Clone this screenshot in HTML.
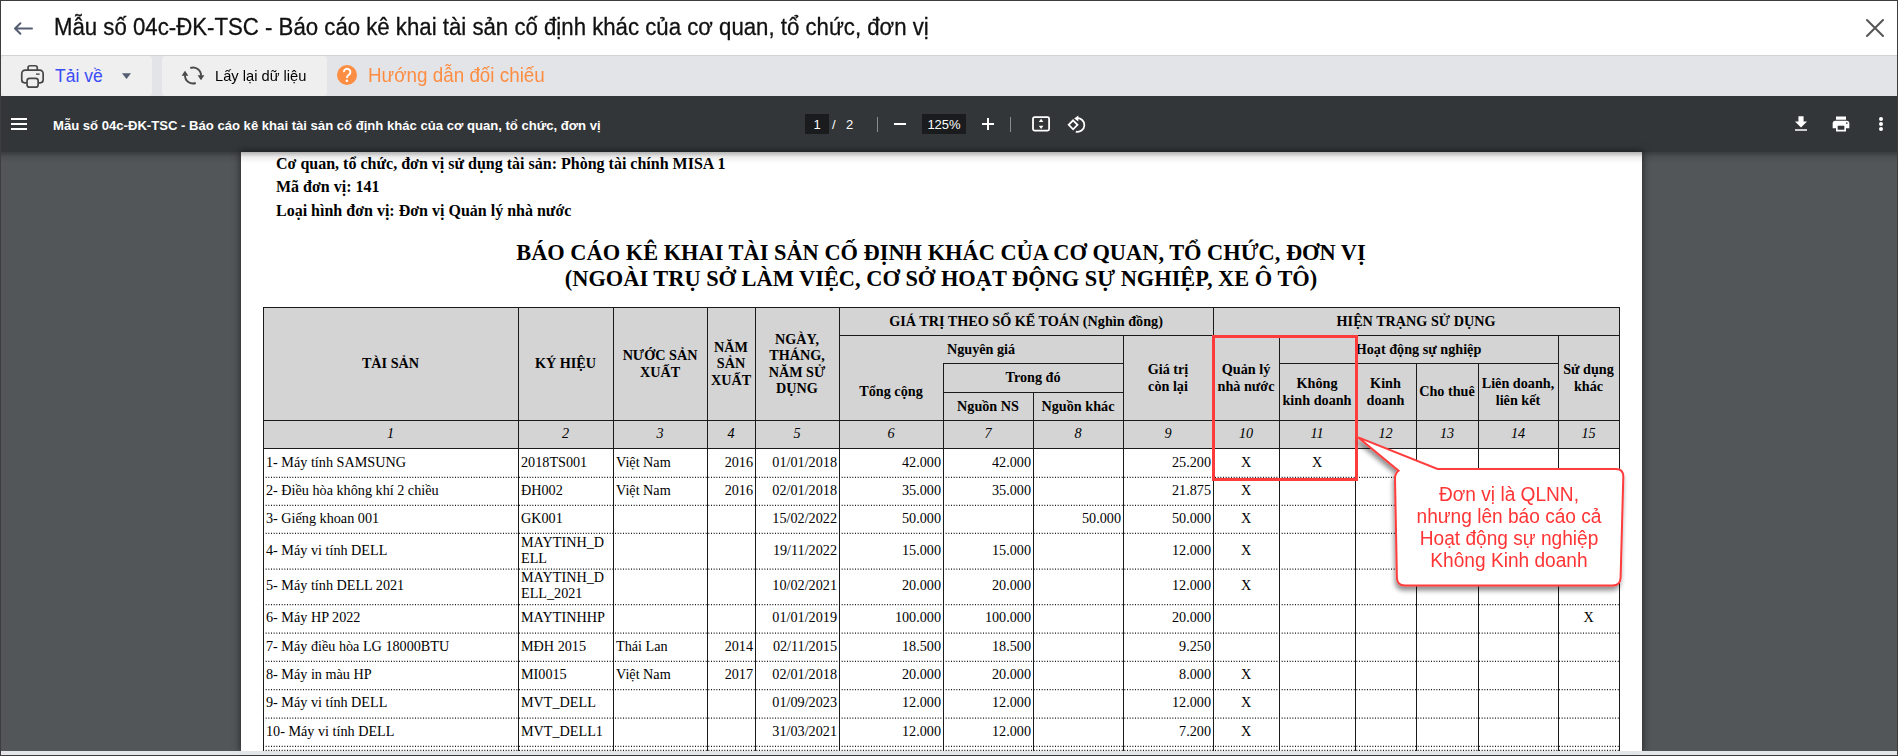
<!DOCTYPE html>
<html><head><meta charset="utf-8"><style>
*{margin:0;padding:0;box-sizing:border-box}
html,body{width:1898px;height:756px;overflow:hidden;background:#3d3d3d;font-family:"Liberation Sans",sans-serif}
.a{position:absolute}
.t{position:absolute;white-space:pre;line-height:1}
.s{font-family:"Liberation Serif",serif;color:#000}
.c{position:absolute;display:flex;align-items:center;justify-content:center;text-align:center;font-family:"Liberation Serif",serif;font-weight:bold;font-size:14.2px;line-height:16.5px;color:#000;white-space:pre}
.d{position:absolute;display:flex;align-items:center;font-family:"Liberation Serif",serif;font-size:14.2px;line-height:16px;color:#000;white-space:pre}
.hl{position:absolute;height:1px;background:#1a1a1a}
.vl{position:absolute;width:1px;background:#1a1a1a}
.dl{position:absolute;height:1px;background:repeating-linear-gradient(90deg,#222 0,#222 1px,transparent 1px,transparent 2.667px)}
</style></head><body>
<div class="a" style="left:1px;top:1px;width:1896px;height:54px;background:#fff"></div>
<div class="a" style="left:1px;top:55px;width:1896px;height:1px;background:#d3d3d5"></div>
<div class="a" style="left:1px;top:56px;width:1896px;height:40px;background:#e3e4e8"></div>
<div class="a" style="left:1px;top:56px;width:151px;height:40px;background:#efefef;border-radius:4px"></div>
<div class="a" style="left:162px;top:56px;width:165px;height:40px;background:#efefef;border-radius:4px"></div>
<div class="a" style="left:1px;top:96px;width:1896px;height:56px;background:#323639"></div>
<div class="a" style="left:1px;top:152px;width:1896px;height:599px;background:#525659"></div>
<svg class="a" style="left:12px;top:20px" width="24" height="17" viewBox="0 0 24 17"><path d="M3 8.5H20M8.4 3.3L3 8.5L8.4 13.7" fill="none" stroke="#555e72" stroke-width="2" stroke-linecap="round" stroke-linejoin="round"/></svg>
<div class="t" style="left:54px;top:16px;font-size:23.5px;color:#111;-webkit-text-stroke:0.3px #111;transform:scaleX(0.945);transform-origin:0 0">Mẫu số 04c-ĐK-TSC - Báo cáo kê khai tài sản cố định khác của cơ quan, tổ chức, đơn vị</div>
<svg class="a" style="left:1864px;top:17px" width="22" height="22" viewBox="0 0 22 22"><path d="M3 3L19 19M19 3L3 19" stroke="#555" stroke-width="2" stroke-linecap="round"/></svg>
<svg class="a" style="left:15px;top:60px" width="40" height="32" viewBox="15 60 40 32" fill="none" stroke="#474747" stroke-width="1.7"><path d="M28.05 70.05V67.75A2 2 0 0 1 30.05 65.75H35.25A2 2 0 0 1 37.25 67.75V70.05"/><path d="M27.05 82.85H24.75A3 3 0 0 1 21.75 79.85V73.55A3.5 3.5 0 0 1 25.25 70.05H39.65A3.5 3.5 0 0 1 43.15 73.55V79.85A3 3 0 0 1 40.15 82.85H38.15"/><rect x="27.05" y="78.35" width="11.1" height="8.8" rx="2.5"/><path d="M36 74.15H39.6" stroke-width="1.4"/></svg>
<div class="t" style="left:55px;top:68px;font-size:17.5px;color:#3b4cf5">Tải về</div>
<svg class="a" style="left:121px;top:72px" width="11" height="8" viewBox="0 0 11 8"><path d="M1 1.2h9L5.5 7z" fill="#555e72"/></svg>
<svg class="a" style="left:179px;top:65px" width="28" height="22" viewBox="179 65 28 22" fill="none" stroke="#4a4a4a" stroke-width="1.9"><path d="M190.3 68A8 8 0 0 1 201 75.8"/><path d="M195.7 83A8 8 0 0 1 185 75.2"/><path d="M197.6 75.2H204.4L201 80.2z" fill="#4a4a4a" stroke="none"/><path d="M181.6 75.8H188.4L185 70.8z" fill="#4a4a4a" stroke="none"/></svg>
<div class="t" style="left:214.5px;top:67.5px;font-size:15px;color:#000;transform:scaleX(0.978);transform-origin:0 0">Lấy lại dữ liệu</div>
<div class="a" style="left:337px;top:65px;width:20px;height:20px;border-radius:50%;background:#fd8d42"></div>
<svg class="a" style="left:337px;top:65px" width="20" height="20" viewBox="0 0 20 20"><path d="M6.9 7.1A3.25 3.25 0 1 1 12.2 9.5L11 10.6Q9.9 11.5 9.9 13" fill="none" stroke="#fff" stroke-width="1.9"/><circle cx="9.9" cy="15.75" r="1.3" fill="#fff"/></svg>
<div class="t" style="left:368.3px;top:66.3px;font-size:19.8px;color:#fd8d42;transform:scaleX(0.952);transform-origin:0 0">Hướng dẫn đối chiếu</div>
<div class="a" style="left:11px;top:118px;width:16px;height:2px;background:#fff"></div>
<div class="a" style="left:11px;top:123px;width:16px;height:2px;background:#fff"></div>
<div class="a" style="left:11px;top:128px;width:16px;height:2px;background:#fff"></div>
<div class="t" style="left:53px;top:118.5px;font-size:13.1px;font-weight:bold;color:#fff">Mẫu số 04c-ĐK-TSC - Báo cáo kê khai tài sản cố định khác của cơ quan, tổ chức, đơn vị</div>
<div class="a" style="left:805px;top:114px;width:24px;height:20px;background:#191b1c"></div>
<div class="t" style="left:805px;top:118px;width:24px;text-align:center;font-size:13px;color:#fff">1</div>
<div class="t" style="left:832px;top:118px;font-size:13px;color:#fff">/</div>
<div class="t" style="left:846px;top:118px;font-size:13px;color:#fff">2</div>
<div class="a" style="left:877px;top:117px;width:1px;height:15px;background:#8a8c8e"></div>
<div class="a" style="left:894px;top:123px;width:12px;height:2px;background:#fff"></div>
<div class="a" style="left:922px;top:114px;width:44px;height:20px;background:#191b1c"></div>
<div class="t" style="left:922px;top:118px;width:44px;text-align:center;font-size:13px;color:#fff">125%</div>
<div class="a" style="left:982px;top:123px;width:12px;height:2px;background:#fff"></div>
<div class="a" style="left:987px;top:118px;width:2px;height:12px;background:#fff"></div>
<div class="a" style="left:1010px;top:117px;width:1px;height:15px;background:#8a8c8e"></div>
<svg class="a" style="left:1031px;top:115px" width="21" height="18" viewBox="0 0 21 18"><rect x="2" y="2.2" width="16.1" height="13.4" rx="1.5" fill="none" stroke="#fff" stroke-width="1.8"/><path d="M7.8 7H12.4L10.1 3.8z M7.8 10.8H12.4L10.1 14z" fill="#fff"/></svg>
<svg class="a" style="left:1064px;top:114px" width="24" height="20" viewBox="0 0 24 20" fill="none" stroke="#fff" stroke-width="1.8"><path d="M9.1 6.3L13.5 10.8L9.1 15.3L4.7 10.8z"/><path d="M12.6 4.3A6.8 6.8 0 1 1 11.8 17.6"/><path d="M10.2 4.6L14.3 1.6L14.3 7.4z" fill="#fff" stroke="none"/></svg>
<svg class="a" style="left:1791px;top:114px" width="20" height="20" viewBox="0 0 24 24"><path fill="#fff" d="M19 9h-4V3H9v6H5l7 7 7-7zM5 18v2h14v-2H5z" transform="translate(12 12) scale(1.03) translate(-12 -12)"/></svg>
<svg class="a" style="left:1831px;top:114px" width="20" height="20" viewBox="0 0 24 24"><path fill="#fff" d="M19 8H5c-1.66 0-3 1.34-3 3v6h4v4h12v-4h4v-6c0-1.66-1.34-3-3-3zm-3 11H8v-5h8v5zm3-7c-.55 0-1-.45-1-1s.45-1 1-1 1 .45 1 1-.45 1-1 1zm-1-9H6v4h12V3z"/></svg>
<div class="a" style="left:1879px;top:117.2px;width:4px;height:4px;border-radius:50%;background:#fff"></div>
<div class="a" style="left:1879px;top:122.2px;width:4px;height:4px;border-radius:50%;background:#fff"></div>
<div class="a" style="left:1879px;top:127.19999999999999px;width:4px;height:4px;border-radius:50%;background:#fff"></div>
<div class="a" style="left:241px;top:152px;width:1401px;height:599px;background:#fff;box-shadow:0 0 7px 1px rgba(0,0,0,.5)"></div>
<div class="a" style="left:1px;top:152px;width:1896px;height:11px;background:linear-gradient(rgba(0,0,0,.3),rgba(0,0,0,.08) 45%,rgba(0,0,0,0))"></div>
<div class="t s" style="left:276px;top:156.0px;font-size:16px;font-weight:bold">Cơ quan, tổ chức, đơn vị sử dụng tài sản: Phòng tài chính MISA 1</div>
<div class="t s" style="left:276px;top:179.4px;font-size:16px;font-weight:bold">Mã đơn vị: 141</div>
<div class="t s" style="left:276px;top:202.7px;font-size:16px;font-weight:bold">Loại hình đơn vị: Đơn vị Quản lý nhà nước</div>
<div class="t s" style="left:0;width:1882px;text-align:center;top:242px;font-size:22.4px;font-weight:bold">BÁO CÁO KÊ KHAI TÀI SẢN CỐ ĐỊNH KHÁC CỦA CƠ QUAN, TỔ CHỨC, ĐƠN VỊ</div>
<div class="t s" style="left:0;width:1882px;text-align:center;top:268px;font-size:22.4px;font-weight:bold">(NGOÀI TRỤ SỞ LÀM VIỆC, CƠ SỞ HOẠT ĐỘNG SỰ NGHIỆP, XE Ô TÔ)</div>
<div class="a" style="left:263px;top:307px;width:1356px;height:141px;background:#d4d4d4"></div>
<div class="c" style="left:263px;top:307px;width:255px;height:113px;">TÀI SẢN</div>
<div class="c" style="left:518px;top:307px;width:95px;height:113px;">KÝ HIỆU</div>
<div class="c" style="left:613px;top:307px;width:94px;height:113px;">NƯỚC SẢN
XUẤT</div>
<div class="c" style="left:707px;top:307px;width:48px;height:113px;">NĂM
SẢN
XUẤT</div>
<div class="c" style="left:755px;top:307px;width:84px;height:113px;">NGÀY,
THÁNG,
NĂM SỬ
DỤNG</div>
<div class="c" style="left:839px;top:307px;width:374px;height:28px;">GIÁ TRỊ THEO SỔ KẾ TOÁN (Nghìn đồng)</div>
<div class="c" style="left:1213px;top:307px;width:406px;height:28px;">HIỆN TRẠNG SỬ DỤNG</div>
<div class="c" style="left:839px;top:335px;width:284px;height:28px;">Nguyên giá</div>
<div class="c" style="left:1123px;top:335px;width:90px;height:85px;">Giá trị
còn lại</div>
<div class="c" style="left:1213px;top:335px;width:66px;height:85px;">Quản lý
nhà nước</div>
<div class="c" style="left:1279px;top:335px;width:279px;height:28px;">Hoạt động sự nghiệp</div>
<div class="c" style="left:1558px;top:335px;width:61px;height:85px;">Sử dụng
khác</div>
<div class="c" style="left:839px;top:363px;width:104px;height:57px;">Tổng cộng</div>
<div class="c" style="left:943px;top:363px;width:180px;height:29px;">Trong đó</div>
<div class="c" style="left:943px;top:392px;width:90px;height:28px;">Nguồn NS</div>
<div class="c" style="left:1033px;top:392px;width:90px;height:28px;">Nguồn khác</div>
<div class="c" style="left:1279px;top:363px;width:76px;height:57px;">Không
kinh doanh</div>
<div class="c" style="left:1355px;top:363px;width:61px;height:57px;">Kinh
doanh</div>
<div class="c" style="left:1416px;top:363px;width:62px;height:57px;">Cho thuê</div>
<div class="c" style="left:1478px;top:363px;width:80px;height:57px;">Liên doanh,
liên kết</div>
<div class="c" style="left:263px;top:419px;width:255px;height:28px;font-weight:normal;font-style:italic">1</div>
<div class="c" style="left:518px;top:419px;width:95px;height:28px;font-weight:normal;font-style:italic">2</div>
<div class="c" style="left:613px;top:419px;width:94px;height:28px;font-weight:normal;font-style:italic">3</div>
<div class="c" style="left:707px;top:419px;width:48px;height:28px;font-weight:normal;font-style:italic">4</div>
<div class="c" style="left:755px;top:419px;width:84px;height:28px;font-weight:normal;font-style:italic">5</div>
<div class="c" style="left:839px;top:419px;width:104px;height:28px;font-weight:normal;font-style:italic">6</div>
<div class="c" style="left:943px;top:419px;width:90px;height:28px;font-weight:normal;font-style:italic">7</div>
<div class="c" style="left:1033px;top:419px;width:90px;height:28px;font-weight:normal;font-style:italic">8</div>
<div class="c" style="left:1123px;top:419px;width:90px;height:28px;font-weight:normal;font-style:italic">9</div>
<div class="c" style="left:1213px;top:419px;width:66px;height:28px;font-weight:normal;font-style:italic">10</div>
<div class="c" style="left:1279px;top:419px;width:76px;height:28px;font-weight:normal;font-style:italic">11</div>
<div class="c" style="left:1355px;top:419px;width:61px;height:28px;font-weight:normal;font-style:italic">12</div>
<div class="c" style="left:1416px;top:419px;width:62px;height:28px;font-weight:normal;font-style:italic">13</div>
<div class="c" style="left:1478px;top:419px;width:80px;height:28px;font-weight:normal;font-style:italic">14</div>
<div class="c" style="left:1558px;top:419px;width:61px;height:28px;font-weight:normal;font-style:italic">15</div>
<div class="hl" style="left:263px;top:307px;width:1357px"></div>
<div class="hl" style="left:839px;top:335px;width:781px"></div>
<div class="hl" style="left:943px;top:363px;width:181px"></div>
<div class="hl" style="left:1279px;top:363px;width:280px"></div>
<div class="hl" style="left:943px;top:392px;width:181px"></div>
<div class="hl" style="left:263px;top:420px;width:1357px"></div>
<div class="hl" style="left:263px;top:448px;width:1357px"></div>
<div class="vl" style="left:263px;top:307px;height:444px"></div>
<div class="vl" style="left:518px;top:307px;height:444px"></div>
<div class="vl" style="left:613px;top:307px;height:444px"></div>
<div class="vl" style="left:707px;top:307px;height:444px"></div>
<div class="vl" style="left:755px;top:307px;height:444px"></div>
<div class="vl" style="left:839px;top:307px;height:444px"></div>
<div class="vl" style="left:943px;top:363px;height:388px"></div>
<div class="vl" style="left:1033px;top:392px;height:359px"></div>
<div class="vl" style="left:1123px;top:335px;height:416px"></div>
<div class="vl" style="left:1213px;top:307px;height:444px"></div>
<div class="vl" style="left:1279px;top:335px;height:416px"></div>
<div class="vl" style="left:1355px;top:363px;height:388px"></div>
<div class="vl" style="left:1416px;top:363px;height:388px"></div>
<div class="vl" style="left:1478px;top:363px;height:388px"></div>
<div class="vl" style="left:1558px;top:335px;height:416px"></div>
<div class="vl" style="left:1619px;top:307px;height:444px"></div>
<div class="d" style="left:266px;top:447px;width:252px;height:29px">1- Máy tính SAMSUNG</div>
<div class="d" style="left:521px;top:447px;width:92px;height:29px">2018TS001</div>
<div class="d" style="left:616px;top:447px;width:91px;height:29px">Việt Nam</div>
<div class="d" style="left:707px;top:447px;width:46px;height:29;justify-content:flex-end;height:29px">2016</div>
<div class="d" style="left:755px;top:447px;width:82px;height:29;justify-content:flex-end;height:29px">01/01/2018</div>
<div class="d" style="left:839px;top:447px;width:102px;height:29;justify-content:flex-end;height:29px">42.000</div>
<div class="d" style="left:943px;top:447px;width:88px;height:29;justify-content:flex-end;height:29px">42.000</div>
<div class="d" style="left:1123px;top:447px;width:88px;height:29;justify-content:flex-end;height:29px">25.200</div>
<div class="d" style="left:1213px;top:447px;width:66px;height:29px;justify-content:center">X</div>
<div class="d" style="left:1279px;top:447px;width:76px;height:29px;justify-content:center">X</div>
<div class="d" style="left:266px;top:476px;width:252px;height:28px">2- Điều hòa không khí 2 chiều</div>
<div class="d" style="left:521px;top:476px;width:92px;height:28px">ĐH002</div>
<div class="d" style="left:616px;top:476px;width:91px;height:28px">Việt Nam</div>
<div class="d" style="left:707px;top:476px;width:46px;height:28;justify-content:flex-end;height:28px">2016</div>
<div class="d" style="left:755px;top:476px;width:82px;height:28;justify-content:flex-end;height:28px">02/01/2018</div>
<div class="d" style="left:839px;top:476px;width:102px;height:28;justify-content:flex-end;height:28px">35.000</div>
<div class="d" style="left:943px;top:476px;width:88px;height:28;justify-content:flex-end;height:28px">35.000</div>
<div class="d" style="left:1123px;top:476px;width:88px;height:28;justify-content:flex-end;height:28px">21.875</div>
<div class="d" style="left:1213px;top:476px;width:66px;height:28px;justify-content:center">X</div>
<div class="d" style="left:266px;top:504px;width:252px;height:28px">3- Giếng khoan 001</div>
<div class="d" style="left:521px;top:504px;width:92px;height:28px">GK001</div>
<div class="d" style="left:755px;top:504px;width:82px;height:28;justify-content:flex-end;height:28px">15/02/2022</div>
<div class="d" style="left:839px;top:504px;width:102px;height:28;justify-content:flex-end;height:28px">50.000</div>
<div class="d" style="left:1033px;top:504px;width:88px;height:28;justify-content:flex-end;height:28px">50.000</div>
<div class="d" style="left:1123px;top:504px;width:88px;height:28;justify-content:flex-end;height:28px">50.000</div>
<div class="d" style="left:1213px;top:504px;width:66px;height:28px;justify-content:center">X</div>
<div class="d" style="left:266px;top:532px;width:252px;height:35.700000000000045px">4- Máy vi tính DELL</div>
<div class="d" style="left:521px;top:532px;width:92px;height:35.700000000000045px">MAYTINH_D
ELL</div>
<div class="d" style="left:755px;top:532px;width:82px;height:35.700000000000045;justify-content:flex-end;height:35.700000000000045px">19/11/2022</div>
<div class="d" style="left:839px;top:532px;width:102px;height:35.700000000000045;justify-content:flex-end;height:35.700000000000045px">15.000</div>
<div class="d" style="left:943px;top:532px;width:88px;height:35.700000000000045;justify-content:flex-end;height:35.700000000000045px">15.000</div>
<div class="d" style="left:1123px;top:532px;width:88px;height:35.700000000000045;justify-content:flex-end;height:35.700000000000045px">12.000</div>
<div class="d" style="left:1213px;top:532px;width:66px;height:35.700000000000045px;justify-content:center">X</div>
<div class="d" style="left:266px;top:567.7px;width:252px;height:35.59999999999991px">5- Máy tính DELL 2021</div>
<div class="d" style="left:521px;top:567.7px;width:92px;height:35.59999999999991px">MAYTINH_D
ELL_2021</div>
<div class="d" style="left:755px;top:567.7px;width:82px;height:35.59999999999991;justify-content:flex-end;height:35.59999999999991px">10/02/2021</div>
<div class="d" style="left:839px;top:567.7px;width:102px;height:35.59999999999991;justify-content:flex-end;height:35.59999999999991px">20.000</div>
<div class="d" style="left:943px;top:567.7px;width:88px;height:35.59999999999991;justify-content:flex-end;height:35.59999999999991px">20.000</div>
<div class="d" style="left:1123px;top:567.7px;width:88px;height:35.59999999999991;justify-content:flex-end;height:35.59999999999991px">12.000</div>
<div class="d" style="left:1213px;top:567.7px;width:66px;height:35.59999999999991px;justify-content:center">X</div>
<div class="d" style="left:266px;top:603.3px;width:252px;height:28.40000000000009px">6- Máy HP 2022</div>
<div class="d" style="left:521px;top:603.3px;width:92px;height:28.40000000000009px">MAYTINHHP</div>
<div class="d" style="left:755px;top:603.3px;width:82px;height:28.40000000000009;justify-content:flex-end;height:28.40000000000009px">01/01/2019</div>
<div class="d" style="left:839px;top:603.3px;width:102px;height:28.40000000000009;justify-content:flex-end;height:28.40000000000009px">100.000</div>
<div class="d" style="left:943px;top:603.3px;width:88px;height:28.40000000000009;justify-content:flex-end;height:28.40000000000009px">100.000</div>
<div class="d" style="left:1123px;top:603.3px;width:88px;height:28.40000000000009;justify-content:flex-end;height:28.40000000000009px">20.000</div>
<div class="d" style="left:1558px;top:603.3px;width:61px;height:28.40000000000009px;justify-content:center">X</div>
<div class="d" style="left:266px;top:631.7px;width:252px;height:28.299999999999955px">7- Máy điều hòa LG 18000BTU</div>
<div class="d" style="left:521px;top:631.7px;width:92px;height:28.299999999999955px">MĐH 2015</div>
<div class="d" style="left:616px;top:631.7px;width:91px;height:28.299999999999955px">Thái Lan</div>
<div class="d" style="left:707px;top:631.7px;width:46px;height:28.299999999999955;justify-content:flex-end;height:28.299999999999955px">2014</div>
<div class="d" style="left:755px;top:631.7px;width:82px;height:28.299999999999955;justify-content:flex-end;height:28.299999999999955px">02/11/2015</div>
<div class="d" style="left:839px;top:631.7px;width:102px;height:28.299999999999955;justify-content:flex-end;height:28.299999999999955px">18.500</div>
<div class="d" style="left:943px;top:631.7px;width:88px;height:28.299999999999955;justify-content:flex-end;height:28.299999999999955px">18.500</div>
<div class="d" style="left:1123px;top:631.7px;width:88px;height:28.299999999999955;justify-content:flex-end;height:28.299999999999955px">9.250</div>
<div class="d" style="left:266px;top:660px;width:252px;height:28.299999999999955px">8- Máy in màu HP</div>
<div class="d" style="left:521px;top:660px;width:92px;height:28.299999999999955px">MI0015</div>
<div class="d" style="left:616px;top:660px;width:91px;height:28.299999999999955px">Việt Nam</div>
<div class="d" style="left:707px;top:660px;width:46px;height:28.299999999999955;justify-content:flex-end;height:28.299999999999955px">2017</div>
<div class="d" style="left:755px;top:660px;width:82px;height:28.299999999999955;justify-content:flex-end;height:28.299999999999955px">02/01/2018</div>
<div class="d" style="left:839px;top:660px;width:102px;height:28.299999999999955;justify-content:flex-end;height:28.299999999999955px">20.000</div>
<div class="d" style="left:943px;top:660px;width:88px;height:28.299999999999955;justify-content:flex-end;height:28.299999999999955px">20.000</div>
<div class="d" style="left:1123px;top:660px;width:88px;height:28.299999999999955;justify-content:flex-end;height:28.299999999999955px">8.000</div>
<div class="d" style="left:1213px;top:660px;width:66px;height:28.299999999999955px;justify-content:center">X</div>
<div class="d" style="left:266px;top:688.3px;width:252px;height:28.40000000000009px">9- Máy vi tính DELL</div>
<div class="d" style="left:521px;top:688.3px;width:92px;height:28.40000000000009px">MVT_DELL</div>
<div class="d" style="left:755px;top:688.3px;width:82px;height:28.40000000000009;justify-content:flex-end;height:28.40000000000009px">01/09/2023</div>
<div class="d" style="left:839px;top:688.3px;width:102px;height:28.40000000000009;justify-content:flex-end;height:28.40000000000009px">12.000</div>
<div class="d" style="left:943px;top:688.3px;width:88px;height:28.40000000000009;justify-content:flex-end;height:28.40000000000009px">12.000</div>
<div class="d" style="left:1123px;top:688.3px;width:88px;height:28.40000000000009;justify-content:flex-end;height:28.40000000000009px">12.000</div>
<div class="d" style="left:1213px;top:688.3px;width:66px;height:28.40000000000009px;justify-content:center">X</div>
<div class="d" style="left:266px;top:716.7px;width:252px;height:28.299999999999955px">10- Máy vi tính DELL</div>
<div class="d" style="left:521px;top:716.7px;width:92px;height:28.299999999999955px">MVT_DELL1</div>
<div class="d" style="left:755px;top:716.7px;width:82px;height:28.299999999999955;justify-content:flex-end;height:28.299999999999955px">31/03/2021</div>
<div class="d" style="left:839px;top:716.7px;width:102px;height:28.299999999999955;justify-content:flex-end;height:28.299999999999955px">12.000</div>
<div class="d" style="left:943px;top:716.7px;width:88px;height:28.299999999999955;justify-content:flex-end;height:28.299999999999955px">12.000</div>
<div class="d" style="left:1123px;top:716.7px;width:88px;height:28.299999999999955;justify-content:flex-end;height:28.299999999999955px">7.200</div>
<div class="d" style="left:1213px;top:716.7px;width:66px;height:28.299999999999955px;justify-content:center">X</div>
<svg class="a" style="left:0;top:0" width="1898" height="756"><g stroke="#111" stroke-width="1.25" stroke-dasharray="1 1.6667"><line x1="263" x2="1619" y1="477.35" y2="477.35"/><line x1="263" x2="1619" y1="505.35" y2="505.35"/><line x1="263" x2="1619" y1="533.35" y2="533.35"/><line x1="263" x2="1619" y1="569.0500000000001" y2="569.0500000000001"/><line x1="263" x2="1619" y1="604.65" y2="604.65"/><line x1="263" x2="1619" y1="633.0500000000001" y2="633.0500000000001"/><line x1="263" x2="1619" y1="661.35" y2="661.35"/><line x1="263" x2="1619" y1="689.65" y2="689.65"/><line x1="263" x2="1619" y1="718.0500000000001" y2="718.0500000000001"/><line x1="263" x2="1619" y1="746.35" y2="746.35"/><line x1="263" x2="1619" y1="750.35" y2="750.35"/></g></svg>
<div class="a" style="left:1px;top:751px;width:1896px;height:4px;background:#e4e5e9"></div>
<div class="a" style="left:1212px;top:335px;width:146px;height:146px;border:3px solid #ff3c3c"></div>
<svg class="a" style="left:0;top:0" width="1898" height="756" viewBox="0 0 1898 756"><defs><filter id="sh" x="-20%" y="-20%" width="140%" height="140%"><feGaussianBlur in="SourceAlpha" stdDeviation="2.5"/><feOffset dx="-1" dy="4"/><feComponentTransfer><feFuncA type="linear" slope="0.45"/></feComponentTransfer><feMerge><feMergeNode/><feMergeNode in="SourceGraphic"/></feMerge></filter></defs><path filter="url(#sh)" d="M1358.3 437.4L1437.5 469L1616 469Q1623.5 469 1623.3 477L1620.6 577.5Q1620.4 585.5 1612.5 585.5L1405 585.5Q1397 585.5 1396.9 577.5L1395 478.5Q1395 473.5 1398.6 470.7Z" fill="#fff" stroke="#ff3c3c" stroke-width="2" stroke-linejoin="miter"/></svg>
<div class="t" style="left:1308.5px;width:400px;text-align:center;top:485.1px;font-size:19.5px;color:#ff3535;transform:scaleX(0.98)">Đơn vị là QLNN,</div>
<div class="t" style="left:1308.5px;width:400px;text-align:center;top:506.9px;font-size:19.5px;color:#ff3535;transform:scaleX(0.98)">nhưng lên báo cáo cả</div>
<div class="t" style="left:1308.5px;width:400px;text-align:center;top:528.8px;font-size:19.5px;color:#ff3535;transform:scaleX(0.98)">Hoạt động sự nghiệp</div>
<div class="t" style="left:1308.5px;width:400px;text-align:center;top:550.9px;font-size:19.5px;color:#ff3535;transform:scaleX(0.98)">Không Kinh doanh</div>
</body></html>
